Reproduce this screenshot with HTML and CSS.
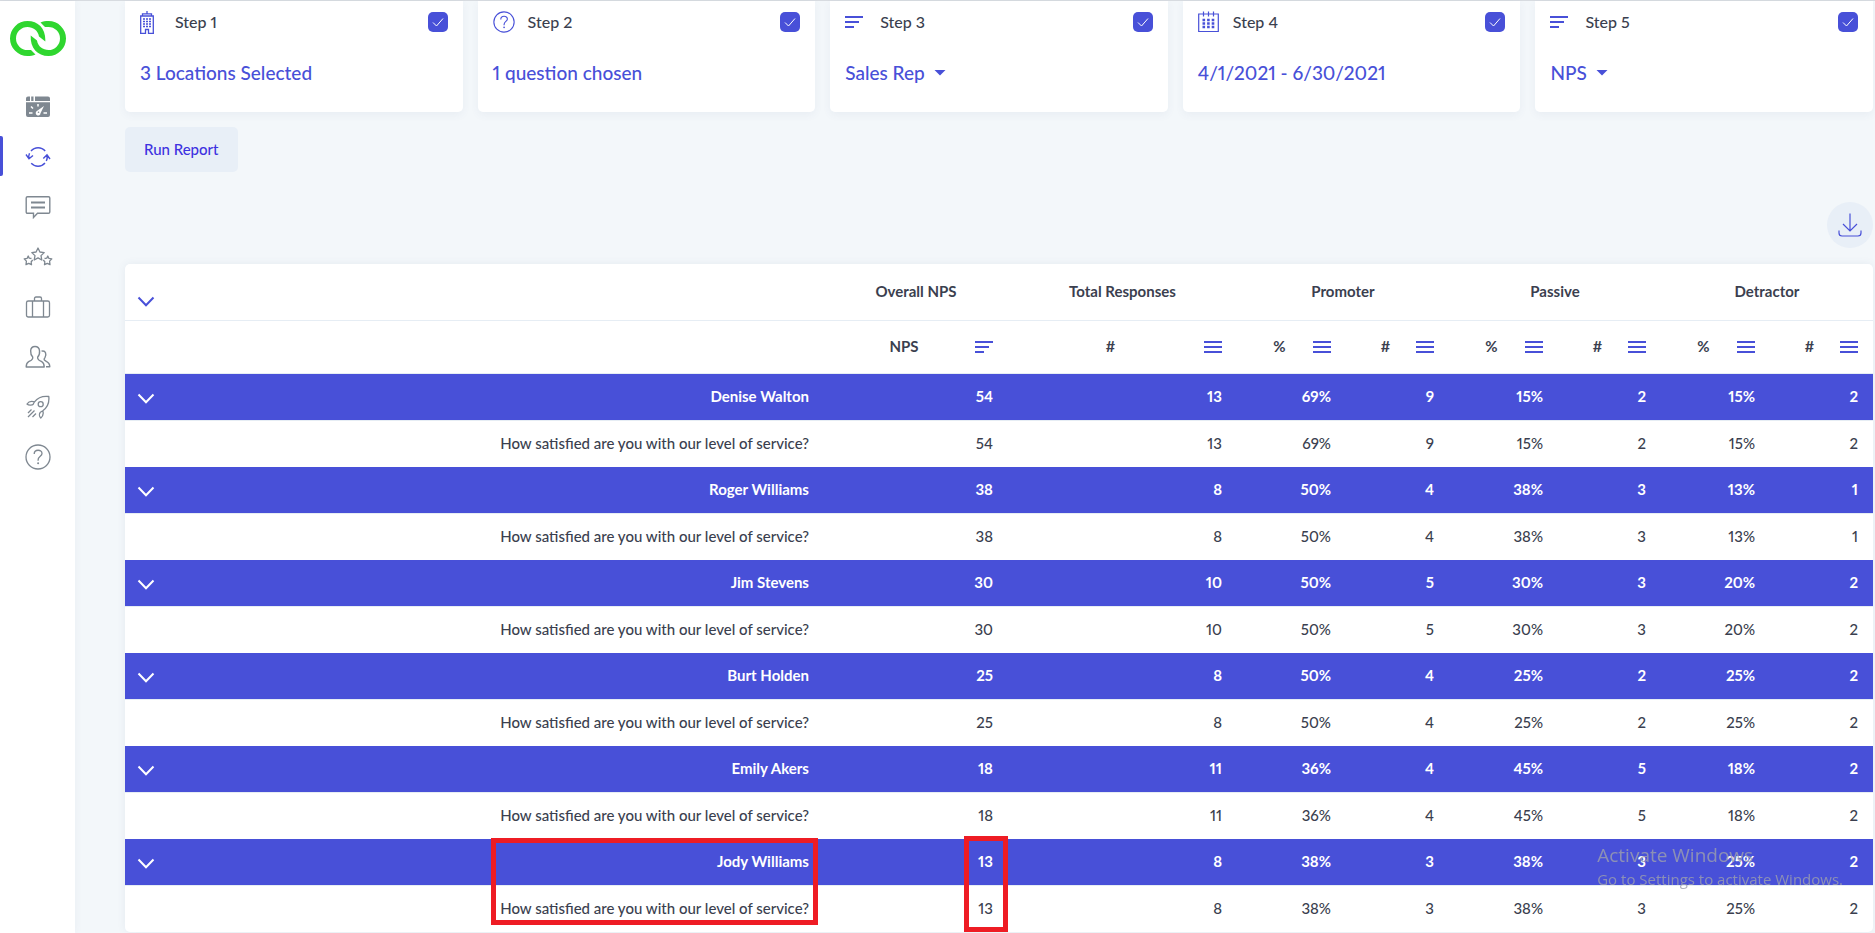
FILE: index.html
```html
<!DOCTYPE html>
<html lang="en">
<head>
<meta charset="utf-8">
<title>NPS Report</title>
<link rel="stylesheet" href="styles.css">
</head>
<body>
<svg class="defs" aria-hidden="true">
  <symbol id="tick" viewBox="0 0 20 20"><path d="M5 10.5l3.500 3.500L15 6.500" fill="none" stroke="#fff" stroke-width="1"/></symbol>
  <symbol id="chevron" viewBox="0 0 18 12"><path d="M1.500 1.500L9 9.200L16.500 1.500" fill="none" stroke="currentColor" stroke-width="2"/></symbol>
  <symbol id="sort" viewBox="0 0 18 12"><path d="M0 1h18M0 6h14M0 11h9" stroke="currentColor" stroke-width="2"/></symbol>
  <symbol id="bars" viewBox="0 0 18 12"><path d="M0 1h18M0 6h18M0 11h18" stroke="currentColor" stroke-width="2"/></symbol>
  <symbol id="help" viewBox="0 0 26 26"><g fill="none" stroke="currentColor" stroke-width="1.300"><circle cx="13" cy="13" r="12"/><path d="M9.200 10c0-5 7.800-4.800 7.800-.5 0 2.800-3.900 3-3.900 6.500v.8"/></g><circle cx="13.100" cy="19.300" r="1"/></symbol>
</svg>
<div class="app">
  <nav class="sidebar" aria-label="Main">
    <a class="logo" href="#" aria-label="Home">
      <svg width="56" height="35" viewBox="10 21 56 35" fill="#2fd62f">
        <path id="ring" d="M35.500 54.500C33 55.700 30.500 56 27.500 56A17.500 17.500 0 0 1 27.500 21C38.500 21 46 29 45.300 41.500L39 36.500C38 30.500 33 27 27.500 27A11.500 11.500 0 0 0 27.500 50L31 50Z"/>
        <use href="#ring" transform="rotate(180 38 38.500)"/>
      </svg>
    </a>
    <a class="nav-item" href="#" aria-label="Dashboard">
      <svg width="24" height="22" viewBox="0 0 24 22"><path fill="currentColor" d="M2 .5h2V5H0V2.500Q0 .5 2 .5ZM5.200 .5h2.300V5H5.200ZM9 .5h13q2 0 2 2V5H9ZM0 6.200h24V19q0 2-2 2H2q-2 0-2-2Z"/><path d="M12 8v2.600M5 10.500l2 2M3 17h3.500M17.500 17H21" stroke="#fff" stroke-width="1.500"/><path fill="#fff" d="M18 10l-3.500 7.200a2.400 2.400 0 1 1-4-1.900Z"/><circle cx="12.500" cy="16.300" r=".8" fill="currentColor"/></svg>
    </a>
    <a class="nav-item active" href="#" aria-label="Reports" aria-current="page">
      <svg width="26" height="22" viewBox="0 0 26 22" fill="none" stroke="currentColor" stroke-width="1.400"><path d="M6 5A9.300 9.300 0 0 1 20.200 5M3.900 12.500A9.300 9.300 0 0 1 4.500 7.200M1 8.500L4 12.800L8 9.500M20 17A9.300 9.300 0 0 1 6.200 17.300M22.100 9.500A9.300 9.300 0 0 1 21.300 15M18.300 12.600L22 8.800L25 13"/></svg>
    </a>
    <a class="nav-item" href="#" aria-label="Feedback">
      <svg width="26" height="24" viewBox="0 0 26 24" fill="none" stroke="currentColor" stroke-width="1.400"><path d="M2.500 1.700h21q1.300 0 1.300 1.300v14q0 1.300-1.300 1.300H12.500L8.500 22.500V18.300H2.500Q1.200 18.300 1.200 17V3Q1.200 1.700 2.500 1.700Z"/><path d="M6 7.500h14M6 12.500h14" stroke-width="1.800"/></svg>
    </a>
    <a class="nav-item" href="#" aria-label="Reviews">
      <svg width="30" height="20" viewBox="0 0 30 20" fill="none" stroke="currentColor" stroke-width="1.300" stroke-linejoin="round"><path d="M15 1l1.900 4 4.300.6-3.200 3 .8 4.400-3.800-2.100-3.800 2.100.8-4.400-3.200-3 4.300-.6Z"/><path id="star-side" d="M8.500 11.500l-2.300-.4L5.200 9 4.200 11.300l-3 .5 2.200 2.300L3 17.700l2.700-1.300 2.800 1.300-.3-3L9.700 13"/><use href="#star-side" transform="matrix(-1 0 0 1 30 0)"/></svg>
    </a>
    <a class="nav-item" href="#" aria-label="Business">
      <svg width="26" height="24" viewBox="0 0 26 24" fill="none" stroke="currentColor" stroke-width="1.300"><rect x="1.500" y="6" width="23" height="16" rx="1.800"/><path d="M7.500 6v16M18.500 6v16M9.500 6V3.500Q9.500 2 11 2h4q1.500 0 1.500 1.500V6"/></svg>
    </a>
    <a class="nav-item" href="#" aria-label="Contacts">
      <svg width="26" height="24" viewBox="0 0 26 24" fill="none" stroke="currentColor" stroke-width="1.400" stroke-linejoin="round"><path d="M10 1.500c-6 0-4.800 8-2.300 10.500.6 3-1.700 3.500-4 4.600C1.500 17.700 1.200 19 1.200 22h18c0-3-.3-4.300-2.500-5.400-2.300-1.100-4.600-1.600-4-4.600C15.200 9.500 16 1.500 10 1.500Z"/><path d="M16.500 6.200c4.300-1.200 5.200 3 3.500 6.300-.5.900-1 1.500-.8 2.300.5 1.700 5.600 1.200 5.600 7H21"/></svg>
    </a>
    <a class="nav-item" href="#" aria-label="Campaigns">
      <svg width="26" height="24" viewBox="0 0 26 24" fill="none" stroke="currentColor" stroke-width="1.300" stroke-linejoin="round"><path d="M9.500 6.800C13 2.300 18 .8 23.800 1.500 24.500 8 22.500 12.500 17.800 15.800M9.500 6.800L8 9.500M17.800 15.800L15 17.500M9.500 6.800C6 5.800 3.500 6.700 2 9c1.500 1.500 5 1.500 6.500.3M17.800 16c1 3-.2 5.500-2 7-1.700-1.500-1.700-4-.6-5.500"/><circle cx="15.700" cy="9.200" r="2.500"/><path d="M6.500 14.500l-3.500 3.500M9.500 15.500l-6.500 6.500M11 18.500L7.500 22"/></svg>
    </a>
    <a class="nav-item" href="#" aria-label="Help"><svg width="26" height="26" fill="currentColor"><use href="#help"/></svg></a>
  </nav>

  <main class="content">
    <section class="steps" aria-label="Report steps">
      <div class="card">
        <div class="card-head">
          <span class="card-icon"><svg width="14" height="23" viewBox="0 0 14 23" fill="none" stroke="currentColor"><path d="M7 0v2.500M2.500 5V2.800h9V5M.7 22.300V5h12.600v17.300M0 22.300h5.500V18.500h3v3.800H14" stroke-width="1.300"/><path d="M3 8h8M3 10.500h8M3 13h8M3 15.500h8" stroke-width="1.500" stroke-dasharray="2 1"/></svg></span>
          <label for="s1">Step 1</label>
          <span class="check"><input type="checkbox" id="s1" checked><svg width="20" height="20"><use href="#tick"/></svg></span>
        </div>
        <a class="card-value" href="#">3 Locations Selected</a>
      </div>
      <div class="card">
        <div class="card-head">
          <span class="card-icon"><svg width="22" height="22" fill="currentColor"><use href="#help"/></svg></span>
          <label for="s2">Step 2</label>
          <span class="check"><input type="checkbox" id="s2" checked><svg width="20" height="20"><use href="#tick"/></svg></span>
        </div>
        <a class="card-value" href="#">1 question chosen</a>
      </div>
      <div class="card">
        <div class="card-head">
          <span class="card-icon"><svg width="18" height="12"><use href="#sort"/></svg></span>
          <label for="s3">Step 3</label>
          <span class="check"><input type="checkbox" id="s3" checked><svg width="20" height="20"><use href="#tick"/></svg></span>
        </div>
        <span class="picker"><select class="card-value" aria-label="Group by"><option>Sales Rep</option></select><svg width="12" height="6" viewBox="0 0 12 6"><path d="M.5 0h11L6 5.500Z" fill="currentColor"/></svg></span>
      </div>
      <div class="card">
        <div class="card-head">
          <span class="card-icon"><svg width="21" height="22" viewBox="0 0 21 22" fill="none" stroke="currentColor"><path d="M.7 3h19.600v17.500H.7ZM5.500 .5v5M10.500 .5v5M15.500 .5v5" stroke-width="1.200"/><path d="M4.500 9h12M4.500 12.500h12M4.500 16h12" stroke-width="2.300" stroke-dasharray="2.600 2"/></svg></span>
          <label for="s4">Step 4</label>
          <span class="check"><input type="checkbox" id="s4" checked><svg width="20" height="20"><use href="#tick"/></svg></span>
        </div>
        <a class="card-value" href="#">4/1/2021 - 6/30/2021</a>
      </div>
      <div class="card">
        <div class="card-head">
          <span class="card-icon"><svg width="18" height="12"><use href="#sort"/></svg></span>
          <label for="s5">Step 5</label>
          <span class="check"><input type="checkbox" id="s5" checked><svg width="20" height="20"><use href="#tick"/></svg></span>
        </div>
        <span class="picker"><select class="card-value" aria-label="Metric"><option>NPS</option></select><svg width="12" height="6" viewBox="0 0 12 6"><path d="M.5 0h11L6 5.500Z" fill="currentColor"/></svg></span>
      </div>
    </section>

    <button class="run" type="button">Run Report</button>

    <div class="tools">
      <button class="download" type="button" aria-label="Download">
        <svg width="24" height="24" viewBox="0 0 24 24" fill="none" stroke="currentColor" stroke-width="1.200"><path d="M12 .5v17M5 11l7 7 7-7M1 17.500V20q0 3 3 3h16q3 0 3-3v-2.500"/></svg>
      </button>
    </div>

    <div class="report">
      <table>
        <colgroup><col class="c-toggle"><col><col class="c-nps"><col class="c-total"><col class="c-pct"><col class="c-num"><col class="c-pct"><col class="c-num"><col class="c-pct"><col class="c-num"></colgroup>
        <thead>
          <tr class="groups">
            <td class="toggle"><button type="button" aria-label="Collapse all"><svg width="18" height="12"><use href="#chevron"/></svg></button></td><td></td>
            <th scope="col">Overall NPS</th><th scope="col">Total Responses</th><th scope="colgroup" colspan="2">Promoter</th><th scope="colgroup" colspan="2">Passive</th><th scope="colgroup" colspan="2">Detractor</th>
          </tr>
          <tr class="sorts">
            <td></td><td></td>
            <th scope="col"><button type="button"><span>NPS</span><svg width="18" height="12"><use href="#sort"/></svg></button></th>
            <th scope="col"><button type="button"><span>#</span><svg width="18" height="12"><use href="#bars"/></svg></button></th>
            <th scope="col"><button type="button"><span>%</span><svg width="18" height="12"><use href="#bars"/></svg></button></th>
            <th scope="col"><button type="button"><span>#</span><svg width="18" height="12"><use href="#bars"/></svg></button></th>
            <th scope="col"><button type="button"><span>%</span><svg width="18" height="12"><use href="#bars"/></svg></button></th>
            <th scope="col"><button type="button"><span>#</span><svg width="18" height="12"><use href="#bars"/></svg></button></th>
            <th scope="col"><button type="button"><span>%</span><svg width="18" height="12"><use href="#bars"/></svg></button></th>
            <th scope="col"><button type="button"><span>#</span><svg width="18" height="12"><use href="#bars"/></svg></button></th>
          </tr>
        </thead>
        <tbody>
          <tr class="rep"><td class="toggle"><button type="button" aria-label="Toggle Denise Walton"><svg width="18" height="12"><use href="#chevron"/></svg></button></td><th scope="row">Denise Walton</th><td>54</td><td>13</td><td>69%</td><td>9</td><td>15%</td><td>2</td><td>15%</td><td>2</td></tr>
          <tr class="question"><td></td><td>How satisfied are you with our level of service?</td><td>54</td><td>13</td><td>69%</td><td>9</td><td>15%</td><td>2</td><td>15%</td><td>2</td></tr>
          <tr class="rep"><td class="toggle"><button type="button" aria-label="Toggle Roger Williams"><svg width="18" height="12"><use href="#chevron"/></svg></button></td><th scope="row">Roger Williams</th><td>38</td><td>8</td><td>50%</td><td>4</td><td>38%</td><td>3</td><td>13%</td><td>1</td></tr>
          <tr class="question"><td></td><td>How satisfied are you with our level of service?</td><td>38</td><td>8</td><td>50%</td><td>4</td><td>38%</td><td>3</td><td>13%</td><td>1</td></tr>
          <tr class="rep"><td class="toggle"><button type="button" aria-label="Toggle Jim Stevens"><svg width="18" height="12"><use href="#chevron"/></svg></button></td><th scope="row">Jim Stevens</th><td>30</td><td>10</td><td>50%</td><td>5</td><td>30%</td><td>3</td><td>20%</td><td>2</td></tr>
          <tr class="question"><td></td><td>How satisfied are you with our level of service?</td><td>30</td><td>10</td><td>50%</td><td>5</td><td>30%</td><td>3</td><td>20%</td><td>2</td></tr>
          <tr class="rep"><td class="toggle"><button type="button" aria-label="Toggle Burt Holden"><svg width="18" height="12"><use href="#chevron"/></svg></button></td><th scope="row">Burt Holden</th><td>25</td><td>8</td><td>50%</td><td>4</td><td>25%</td><td>2</td><td>25%</td><td>2</td></tr>
          <tr class="question"><td></td><td>How satisfied are you with our level of service?</td><td>25</td><td>8</td><td>50%</td><td>4</td><td>25%</td><td>2</td><td>25%</td><td>2</td></tr>
          <tr class="rep"><td class="toggle"><button type="button" aria-label="Toggle Emily Akers"><svg width="18" height="12"><use href="#chevron"/></svg></button></td><th scope="row">Emily Akers</th><td>18</td><td>11</td><td>36%</td><td>4</td><td>45%</td><td>5</td><td>18%</td><td>2</td></tr>
          <tr class="question"><td></td><td>How satisfied are you with our level of service?</td><td>18</td><td>11</td><td>36%</td><td>4</td><td>45%</td><td>5</td><td>18%</td><td>2</td></tr>
          <tr class="rep"><td class="toggle"><button type="button" aria-label="Toggle Jody Williams"><svg width="18" height="12"><use href="#chevron"/></svg></button></td><th scope="row">Jody Williams</th><td>13</td><td>8</td><td>38%</td><td>3</td><td>38%</td><td>3</td><td>25%</td><td>2</td></tr>
          <tr class="question"><td></td><td>How satisfied are you with our level of service?</td><td>13</td><td>8</td><td>38%</td><td>3</td><td>38%</td><td>3</td><td>25%</td><td>2</td></tr>
        </tbody>
      </table>
      <div class="mark mark-name"></div>
      <div class="mark mark-score"></div>
    </div>
  </main>
</div>
<div class="watermark"><div class="watermark-title">Activate Windows</div><div>Go to Settings to activate Windows.</div></div>
</body>
</html>
```
FILE: styles.css
```css
* { box-sizing: border-box; }
body {
  margin: 0;
  background: #f3f7fa;
  color: #3b3f4f;
  font: 500 15px/20px Lato, "Liberation Sans", sans-serif;
  font-variant-numeric: proportional-nums;
  overflow: hidden;
}
svg { display: block; }
.defs { position: absolute; width: 0; height: 0; }
button, select { font: inherit; color: inherit; background: none; border: 0; padding: 0; cursor: pointer; }
a { color: inherit; text-decoration: none; }

.app { display: flex; min-height: 100vh; border-top: 1px solid #d7dbe0; }

.sidebar { width: 75px; flex: none; background: #fff; padding-top: 20px; color: #7f8891; box-shadow: 0 0 8px rgba(60, 90, 130, .06); }
.logo { display: flex; justify-content: center; height: 61px; }
.nav-item { display: flex; align-items: center; justify-content: center; height: 50px; }
.nav-item.active { color: #4850d8; position: relative; }
.nav-item.active::before { content: ""; position: absolute; left: 0; top: 4px; width: 3px; height: 40px; background: #4850d8; border-radius: 0 2px 2px 0; }

.content { flex: 1; min-width: 0; padding: 0 2px 0 50px; }

.steps { display: grid; grid-template-columns: repeat(5, 1fr); gap: 15px; color: #4850d8; }
.card { height: 111px; padding: 6px 15px; background: #fff; border-radius: 0 0 5px 5px; box-shadow: 0 3px 8px rgba(60, 90, 130, .06); }
.card-head { display: flex; align-items: center; height: 30px; }
.card-icon { width: 35px; }
.card-head label { flex: 1; color: #3b3f4f; font-size: 16px; }
.check { display: grid; }
.check > * { grid-area: 1 / 1; }
.check input { appearance: none; width: 20px; height: 20px; margin: 0; border-radius: 5px; background: #4850d8; }
.check svg { pointer-events: none; }
.card-value { display: block; margin-top: 24px; font-size: 19px; line-height: 24px; }
.picker { display: flex; align-items: center; gap: 9px; margin-top: 24px; }
.picker .card-value { appearance: none; margin: 0; }

.run { display: block; height: 45px; margin-top: 15px; padding: 0 19px 2px; border-radius: 5px; background: #e8eff7; color: #3d32e0; }

.tools { display: flex; justify-content: flex-end; margin-top: 30px; }
.download { display: flex; align-items: center; justify-content: center; width: 46px; height: 46px; border-radius: 50%; background: #e8eff7; color: #4850d8; }

.report { position: relative; margin-top: 16px; background: #fff; border-radius: 5px; box-shadow: 0 0 8px rgba(60, 90, 130, .08); }
table { width: 100%; table-layout: fixed; border-collapse: separate; border-spacing: 0; }
.c-toggle { width: 42px; }
.c-nps { width: 184px; }
.c-total { width: 229px; }
.c-pct { width: 109px; }
.c-num { width: 103px; }
td, th { height: 46px; padding: 0 15px 2px; text-align: right; font-weight: 500; }
td.toggle { padding: 3px 0 0 12px; }
.toggle button { display: block; }
.groups > * { height: 57px; border-bottom: 1px solid #e6edf4; }
.groups td.toggle { padding-top: 19px; color: #4850d8; }
.groups th { font-weight: 700; text-align: center; }
.sorts > * { height: 53px; border-bottom: 1px solid #e6edf4; }
.sorts th { padding-bottom: 0; font-weight: 700; }
.sorts button { display: flex; align-items: center; gap: 6px; width: 100%; }
.sorts span { flex: 1; padding-bottom: 2px; text-align: center; }
.sorts svg { color: #4850d8; }
.rep { background: #4850d8; color: #fff; }
.rep > * { font-weight: 700; }
.question > * { height: 47px; border-top: 1px solid #e6edf4; }

.mark { position: absolute; border: 5px solid #ee1c24; pointer-events: none; }
.mark-name { right: 1055px; bottom: 7px; width: 327px; height: 87px; }
.mark-score { right: 865px; bottom: 0; width: 44px; height: 96px; }

.watermark { position: fixed; right: 32px; bottom: 43px; color: rgba(158, 160, 172, .8); font: 15px/22px "Open Sans", "Noto Sans", sans-serif; pointer-events: none; }
.watermark-title { font-size: 19px; line-height: 26px; }
```
